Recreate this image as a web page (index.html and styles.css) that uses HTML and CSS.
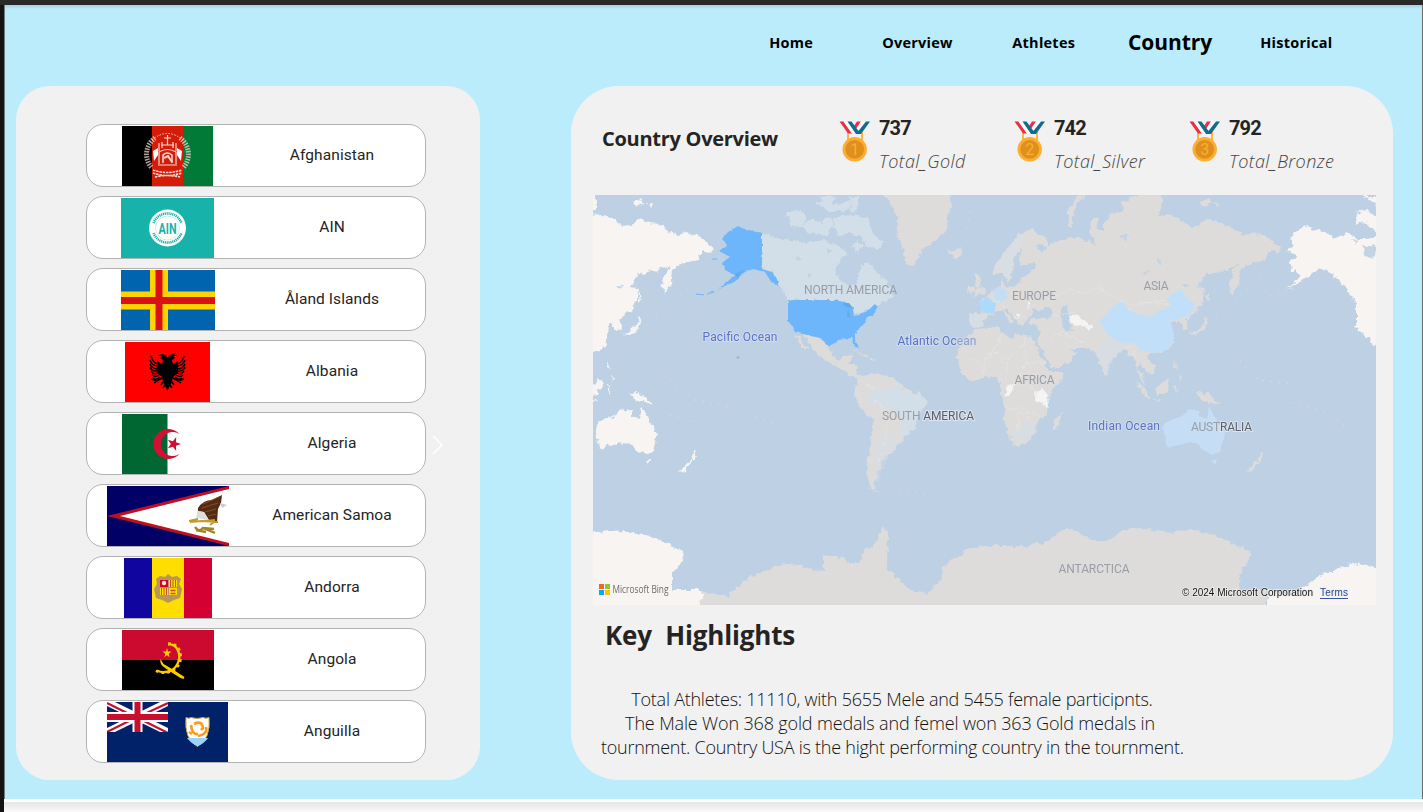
FILE: index.html
```html
<!DOCTYPE html>
<html lang="en">
<head>
<meta charset="utf-8">
<title>Country Overview</title>
<link rel="stylesheet" href="styles.css">
</head>
<body>
<div class="topbar"></div>
<div class="stage">
<main class="report">
  <nav class="nav">
    <a>Home</a><a>Overview</a><a>Athletes</a><a class="active">Country</a><a>Historical</a>
  </nav>
  <div class="panels">
    <section class="panel countries">
      <ul class="list">
        <li class="card"><span class="flag"><svg width="91" height="60" viewBox="0 0 91 60"><path d="M0 0h31v60H0z"/><path fill="#d51c08" d="M30 0h31v60H30z"/><path fill="#007a36" d="M61 0h30v60H61z"/><g fill="none" stroke="#f3d9d3"><path d="M33 12a20 20 0 0 0-3 30M58 12a20 20 0 0 1 3 30" stroke-width="5" stroke-dasharray="1.500 1.100" opacity=".75"/><path d="M30 14q15-13 31 0" stroke-width="1" stroke-dasharray="1.500 1.500"/><path d="M37 38V26q8.500-5 17 0v12M37 25v-8M54 25v-8M40 22v-6M51 22v-6M45.500 19V9M42 12h7M36 39h19M39 19h13" stroke-width="1.200"/><path d="M41 37v-8q4-4 9 0v8" stroke-width="1.500"/><path d="M42 32l4-2 4 6" stroke-width="2"/><path d="M31 44q14 5 29 0M31 47q14 5 29 0M33 51q12-3 25 0" stroke-width="1.600" stroke-dasharray="2.500 .8"/></g><path d="M31 25l5-3v7l-4 6zM60 25l-5-3v7l4 6z" fill="#fff"/></svg></span><span class="name">Afghanistan</span></li>
        <li class="card"><span class="flag"><svg width="93" height="60" viewBox="0 0 93 60"><path fill="#17b2aa" d="M0 0h93v60H0z"/><circle cx="46.500" cy="30" r="18.500" fill="#fff"/><path d="M32.500 25a15 15 0 0 1 28 0M32.500 35a15 15 0 0 0 28 0" fill="none" stroke="#17b2aa" stroke-width="2.500" stroke-dasharray="1.200 .7"/><circle cx="46.500" cy="30" r="12" fill="#fff" stroke="#b3e4e1" stroke-width=".7"/><text class="ain" x="37.500" y="35.500" textLength="18" lengthAdjust="spacingAndGlyphs">AIN</text></svg></span><span class="name">AIN</span></li>
        <li class="card"><span class="flag"><svg width="94" height="60" viewBox="0 0 94 60"><path fill="#0064ae" d="M0 0h94v60H0z"/><path fill="#ffd300" d="M29 0h18v60H29zM0 21.500h94v18H0z"/><path fill="#db0f16" d="M34.500 0h7v60h-7zM0 27h94v7H0z"/></svg></span><span class="name">Åland Islands</span></li>
        <li class="card"><span class="flag"><svg width="85" height="60" viewBox="0 0 85 60"><path fill="red" d="M0 0h85v60H0z"/><g id="wing"><path d="M43 17q-2-5-7-5l-3 2 4 0-2 2 3 2-1 4q-3-1-5-4l0 13 5 4 1 5 2 4 3 5z"/><path d="M33 22q-5-1-7-8M33 24q-6 0-8-6M33 27q-6 0-8-5M33 29q-6 1-8-4M33 31q-5 2-7-2M34 33q-4 3-7 0M35 35q-4 4-7 1M37 36l-5 3-6-2M32 39l-3 2M38 40l-2 3M40 43l-2 3" fill="none" stroke="#000" stroke-width="1.500"/></g><use href="#wing" transform="matrix(-1 0 0 1 85 0)"/></svg></span><span class="name">Albania</span></li>
        <li class="card"><span class="flag"><svg width="91" height="60" viewBox="0 0 91 60"><path fill="#006632" d="M0 0h45.500v60H0z"/><path fill="#d21034" d="M57.500 20a15 15 0 1 0 0 20 12 12 0 1 1 0-20zM59 30l-5-1.800.2-5.200-3.300 4.200-5-1.500 2.900 4.300-2.900 4.300 5-1.500 3.300 4.200-.2-5.200z"/></svg></span><span class="name">Algeria</span></li>
        <li class="card"><span class="flag"><svg width="122" height="60" viewBox="0 0 122 60"><path fill="#000066" d="M0 0h122v60H0z"/><path fill="#bd1021" d="M0 30L122 0v60z"/><path fill="#fff" d="M13 30L122 3v54z"/><path fill="#542b15" d="M91 22q5-8 14-8l10-5-1 8-3 6-1 13-8-2-5-8-6-1z"/><path d="M96 18l16-7M95 22l16-5M98 26l11-3M101 30l8-2" stroke="#8a4b26"/><path fill="#ccc" d="M113 17l7 2-5 3z"/><path fill="#ddd" d="M90 25l7 1 4 8-10-2-2 3z"/><path d="M82 35l9-2M83 36l12-1 16 1M98 35l10-1M107 36l-4 3" fill="none" stroke="#c29b28" stroke-width="2"/><path d="M88 41q4 6 8 1l12 5M89 44l10 2M96 42l11 1" fill="none" stroke="#a38324" stroke-width="2.400"/></svg></span><span class="name">American Samoa</span></li>
        <li class="card"><span class="flag"><svg width="88" height="60" viewBox="0 0 88 60"><path fill="#10069f" d="M0 0h28.500v60H0z"/><path fill="#fedd00" d="M28 0h32v60H28z"/><path fill="#d50032" d="M60 0h28v60H60z"/><path fill="#b89658" d="M32 21l4-3 5 1 3-3 4 3 5-1 4 3-2 5 3 5-2 9-6 2-6 3-6-3-6-2-2-9 3-5z"/><path fill="#d50032" d="M36 22h8v7h-8zM45 30h8v7h-8z"/><path fill="#fedd00" d="M45 22h8v7h-8zM36 30h8v7h-8z"/><path d="M46.500 22v7M49 22v7M51.500 22v7M37.500 30v7M40 30v7M42.500 30v7" stroke="#c8502d"/><path fill="#fedd00" d="M45 30h8v7h-8z"/><path d="M46.500 32.500h5M46.500 35.500h5" stroke="#c8502d" stroke-width="1.300"/><circle cx="40" cy="25" r="2.200" fill="#f6e8c8"/></svg></span><span class="name">Andorra</span></li>
        <li class="card"><span class="flag"><svg width="92" height="60" viewBox="0 0 92 60"><path fill="#cc092f" d="M0 0h92v30H0z"/><path d="M0 30h92v30H0z"/><path fill="none" stroke="#ffcb00" stroke-width="2.400" d="M46 14.500c9-1 13 9 10.500 17-3 9-12 13-22 9"/><path fill="none" stroke="#ffcb00" stroke-width="2.500" stroke-dasharray="2.800 3" d="M46 13.500c12 0 14 10 12 19-4 9-14 13-25 8"/><path fill="#ffcb00" d="M38.500 29l3 5q9 5 21 13l-1 2-3-1q-13-8-18-12-3-3-2-7zM45 18l1 3.500 3.500 0-2.800 2.200 1 3.500-2.700-2-2.700 2 1-3.500-2.800-2.200h3.500z"/></svg></span><span class="name">Angola</span></li>
        <li class="card"><span class="flag"><svg width="121" height="60" viewBox="0 0 121 60"><path fill="#012169" d="M0 0h121v60H0z"/><svg width="61" height="30" viewBox="0 0 61 30"><path d="M0 0l61 30M61 0L0 30" stroke="#fff" stroke-width="7"/><path d="M0 1l30 15M61 1L31 15M61 31L31 16M0 30l30-15" stroke="#c8102e" stroke-width="2.200"/><path d="M30.500 0v30M0 15h61" stroke="#fff" stroke-width="10"/><path d="M30.500 0v30M0 15h61" stroke="#c8102e" stroke-width="6"/></svg><path fill="#fff" stroke="#d1a63a" d="M79 15.500q3 1.500 5 0 6 2 12 0 3 1.500 6 0 2 21-11.500 29Q77 37 79 15.500z"/><path fill="#9bd3ff" d="M80 36h21q-3 5-10.500 8-7-3-10.500-8z"/><path fill="none" stroke="#ff9a18" stroke-width="2.600" d="M87 22q8-4 9 4l-2 2M99 25q2 7-8 9M91 32q-6 1-7-9M82 30l3 2"/></svg></span><span class="name">Anguilla</span></li>
      </ul>
      <svg class="chevron" width="12" height="20" viewBox="0 0 12 20"><path d="M1 1l9 9-9 9" fill="none" stroke="#fff" stroke-width="1.500"/></svg>
    </section>

    <section class="panel overview">
      <header class="head">
        <h1>Country Overview</h1>
        <div class="stat"><svg class="medal" width="32" height="42" viewBox="0 0 32 42"><g id="medal"><path d="M9 11v8M23 11v8" stroke="#fbb031" stroke-width="1.800"/><path fill="#ec2f49" d="M.5.500h4l8.500 12H9zM18 .500h4L17 8l-2-3z"/><path fill="#fafafa" d="M4.500.500h4l8 12H13zM22 .500h5l-8 11-2-3.500z"/><path fill="#136b8e" d="M8.500.500h4L21 12l-4 1zM27 .500h4L22 13h-5z"/><circle cx="15.700" cy="28.300" r="12.200" fill="#fbae2f"/><circle cx="15.700" cy="28.300" r="9.400" fill="#df901c"/></g><text class="rank" x="15.700" y="34">1</text></svg><div><b>737</b><i>Total_Gold</i></div></div>
        <div class="stat"><svg class="medal" width="32" height="42" viewBox="0 0 32 42"><use href="#medal"/><text class="rank" x="15.700" y="34">2</text></svg><div><b>742</b><i>Total_Silver</i></div></div>
        <div class="stat"><svg class="medal" width="32" height="42" viewBox="0 0 32 42"><use href="#medal"/><text class="rank" x="15.700" y="34">3</text></svg><div><b>792</b><i>Total_Bronze</i></div></div>
      </header>

      <svg class="map" width="783" height="410" viewBox="593 195 783 410">
        <defs>
          <filter id="coast" filterUnits="userSpaceOnUse" x="570" y="180" width="1400" height="460" color-interpolation-filters="sRGB"><feTurbulence type="fractalNoise" baseFrequency=".17" numOctaves="3" seed="4"/><feDisplacementMap in="SourceGraphic" scale="7" xChannelSelector="R" yChannelSelector="G"/></filter>
          <filter id="fine" filterUnits="userSpaceOnUse" x="570" y="180" width="1400" height="460" color-interpolation-filters="sRGB"><feTurbulence type="fractalNoise" baseFrequency=".2" numOctaves="2" seed="9"/><feDisplacementMap in="SourceGraphic" scale="3" xChannelSelector="R" yChannelSelector="G"/></filter>
          <clipPath id="west"><path d="M580 185H718V500H701V625H580z"/></clipPath>
          <clipPath id="east"><path d="M1285 185h105v440h-123V500h18z"/></clipPath>
          <path id="asia" d="M1060 350L1075 348 1083 348 1095 350 1102 370 1106 376 1110 367 1111 361 1124 348 1130 357 1135 360 1140 377 1145 386 1143 376 1138 368 1140 360 1145 372 1153 373 1155 367 1149 357 1151 353 1157 353 1170 349 1174 340 1173 333 1169 325 1172 322 1180 321 1183 330 1188 329 1186 320 1197 312 1204 300 1205 288 1197 287 1207 273 1227 270 1238 265 1232 273 1229 285 1232 294 1239 282 1240 270 1250 263 1265 260 1270 250 1278 253 1282 249 1277 245 1267 237 1253 233 1243 235 1235 230 1220 223 1207 219 1198 225 1190 227 1178 218 1168 214 1157 215 1162 208 1162 197 1157 193 1140 194 1133 198 1122 203 1123 210 1110 215 1103 223 1103 233 1098 230 1097 217 1092 220 1090 233 1097 245 1080 237 1070 237 1052 243 1042 253 1036 260 1036 300 1040 305 1052 310 1052 319 1045 318 1030 319 1028 324 1038 326 1040 335 1037 341 1047 360 1052 368 1070 362 1077 353 1068 347z"/>
          <path id="aisles" d="M1135 381l5 3 10 13-4 0zM1155 388l12-9 3 6-5 9-8 1zM1150 398l14 3-4 1zM1174 385l3 0-2 3 3 6-4-2zM1174 360l3 5-1 6zM1178 375l4 2-2 4zM1197 393l12 1 10 11-8-3-8-1-2-4zM1189 334l8-3 7-7 2-8 2 8-5 7-8 4zM1206 290l2 10-2 2zM1199 202l9-3 4 4-8 4zM1214 203l6 1-3 3z"/>
          <path id="aus" d="M1163 427L1165 422 1182 416 1190 409 1199 411 1199 416 1207 419 1209 406 1215 418 1225 433 1220 452 1212 455 1203 450 1198 444 1190 442 1167 448zM1211 460l6 0-2 5z"/>
          <path id="nz" d="M1261 452l3 3-4 7-2-3zM1257 460l2 3-8 9-4-1zM1197 393l12 1 10 11-8-3-8-1-2-4z"/>
          <path id="ant" d="M701 625V591L727 597 737 587 750 577 773 568 787 563 810 568 823 572 823 555 843 558 857 565 865 550 875 545 883 525 888 533 887 570 910 590 927 593 942 578 943 567 967 550 983 546 1027 546 1045 542 1068 528 1080 534 1103 543 1120 532 1135 527 1163 532 1193 530 1213 535 1233 543 1252 553 1246 565 1240 573 1240 590 1267 590V625z"/>
          <path id="alaska" d="M738 226L747 230 762 233V269L772 272 779 283 777 286 770 280 765 272 753 269 745 272 737 280 723 287 718 290 735 275 725 270 723 262 730 257 719 251 727 245 722 239 728 232z"/>
        </defs>
        <path fill="#bdd0e4" d="M593 195h783v410H593z"/>
        <g filter="url(#coast)">
          <g fill="#dddcdb">
            <use href="#asia"/><use href="#aisles"/><use href="#nz"/><use href="#ant"/>
            <path d="M1045 250L1030 273 1022 278 1017 285 1005 287 1003 279 1000 287 992 290 988 297 978 302 983 307 980 314 969 313 969 323 975 327 982 325 987 317 993 315 997 310 1002 311 1008 320 1013 324 1012 318 1004 310 1007 308 1015 318 1018 325 1024 324 1027 318 1032 316 1032 308 1043 311 1047 300z"/>
            <path d="M994 274L993 267 1002 258 1007 248 1017 235 1032 229 1047 240 1047 247 1037 244 1042 253 1036 262 1022 266 1019 260 1021 248 1015 256 1013 270 1008 282 1003 274z"/>
            <path d="M975 329L987 328 998 326 1002 333 1013 338 1017 333 1033 337 1035 343 1043 360 1050 372 1063 372 1060 382 1050 393 1047 400 1047 415 1038 422 1035 433 1027 443 1013 447 1010 437 1003 420 1005 410 1000 395 1000 385 997 378 983 377 970 381 960 370 957 357 960 345zM1062 411l-2 12-5 8-3-4 2-9 5-2z"/>
            <path d="M974 274l5 2 1 8 5 9-12 3 4-8zM967 294l1-7 6-2 0 7zM948 252l13-3 2 5-8 5zM875 190L887 198 897 217 898 233 902 250 908 265 915 267 922 250 937 240 948 228 947 217 952 207 950 190zM1090 193l-13 10-5 14 2 11-6-3 0-14 10-15z"/>
            <path d="M798 335l10 15-5-1-8-15M802 333L820 338 831 347 832 356 840 361 843 357 853 354 850 363 857 367 858 375 866 377 862 380 850 375 837 366 820 357 811 346zM852 350l16 5-2 2zM869 358l6 0 0 2z"/>
            <path d="M857 380L870 372 893 377 903 387 925 397 927 403 920 413 915 427 902 440 893 452 883 460 878 473 873 485 879 493 870 487 867 473 870 447 873 420 863 410 855 397z"/>
          </g>
          <g fill="#d3dfe8">
            <path d="M762 233L777 238 790 240 807 243 823 240 837 245 847 253 837 262 835 273 843 283 856 285 862 265 868 262 873 270 883 277 890 285 893 297 883 302 865 311 853 314 850 306 835 300H787L779 285 772 272 762 269z"/>
            <path d="M787 212l11-3 9 9-6 8-10 1zM800 226l12-7 10 4 8-6 3 8-6 11-17-3zM817 203l12-4 5 6 17-4-3 9-20 2zM832 219l12-6 9 4-3 15-12 5zM850 196l8 0 0 10-7 8zM855 215l13 4 5 15 11 8-6 8-10-4-9-10-8-2-6-9zM820 195l18 2-6 5-10-1zM857 240l8 6-8 7-6-6z"/>
            <path d="M868 397l9-9 11 2 8-4 6 4 23 7 2 6-7 10-5 12-12 13-4-5 4-12-12-13-10-1-10-6z"/><path d="M874 440l18-10 7 12-12 16-10 25-3-1z" opacity=".35"/>
            <path d="M970 315l15 0-6 10-7 0z"/><path d="M1098 345l15-9 10 12-12 15-5 12-9-21z" opacity=".55"/><path d="M1014 432l14-11 8 5-5 10-14 8z" opacity=".6"/>
            <path d="M994 268l10-12 5-10 9-10 10-4-9 14-4 12-3 18-8 2z" opacity=".5"/>
          </g>
          <path fill="#f4f4f4" d="M1069 316l9 0 14 10-3 4-9-4-9-1zM1006 388l9-5-3 9-6 5zM1034 393l8-4 5 5 1 13-12-7zM1016 314l4 2-2 3zM1028 302l3 4-3 4z"/>
          <path fill="#bdd0e4" d="M1062 308l5-3 1 12 3 14-5 3-4-13z"/>
          <g fill="#f7f4f1">
            <g clip-path="url(#west)"><use href="#asia" x="-567"/><use href="#aisles" x="-567"/><path d="M585 220l30 0 5 100-12 5-2 22-21 6z"/><path d="M580 190h16v19h-16zM580 385h20l-4 9-16 4z"/></g>
            <use href="#aus" x="-567"/><use href="#nz" x="-567"/>
            <g clip-path="url(#west)"><use href="#ant" x="-567"/></g>
            <path d="M580 532h20v93h-20z"/>
            <path d="M680 591h21v34h-21z"/>
            <g clip-path="url(#east)"><use href="#alaska" x="567"/><use href="#ant" x="567"/></g>
            <path d="M1325 233L1337 238 1348 233 1360 240 1382 233V350L1366 337 1356 327V305L1345 286 1334 273 1325 269zM1355 212l12-2 10 8v14l-14-10-6 2zM1363 196l16 0v12z"/>
          </g>
        </g>
        <g fill="#c2d3e4" filter="url(#coast)"><path d="M1363 245l14 2-5 12-8-5zM1352 239l7 2-2 4zM795 256l7 2-4 3zM806 275l7-2-4 5zM825 249l8 3-6 3zM1140 273l10-2-4 5zM1182 285l8 0-4 3zM1120 235l9 0-4 6zM1156 258l6 2-3 4zM615 285l8 1-4 3z"/></g>
        <g filter="url(#fine)">
          <path fill="#c2dff9" d="M1100 320L1113 307 1122 301 1128 310 1148 317 1172 305 1167 300 1173 293 1182 289 1187 300 1196 303 1190 315 1178 319 1170 322 1174 333 1173 344 1164 351 1149 353 1140 350 1135 342 1120 343 1107 334z"/>
          <path fill="#addafb" d="M978 302l10-5 8 7-2 10-11-1z"/><path fill="#c5ddf3" d="M992 290l8-3 7 3 0 9-5 5-8-5z"/>
          <use href="#aus" fill="#c5def5"/>
          <g fill="#6eb6fb"><use href="#alaska"/><path d="M788 300H835L848 303 853 308 854 316 865 313 875 304 878 308 873 315 867 317 865 322 855 333 855 340 859 348 855 347 852 338 838 340 830 347 820 338 807 335 795 332 788 320z"/><path d="M712 259l5 0M696 294l8 1M707 294l7-2" stroke="#6eb6fb"/><path d="M737 355l3 3-2 0z"/></g>
          <path fill="#61a9ed" d="M842 303l7 0 4 5-8-2zM848 309l2 8-3 0zM735 274l10-5-7 8z"/>
        </g>
        <g fill="none" stroke="#e7e6e4" stroke-width=".7" filter="url(#coast)"><path d="M969 360h14l10-10 12-18M982 377l3-17 10-8 12 10v18M1007 360l18-16M1025 338v25h20M1025 363l-6 13 18 0M1007 385l23 0 8 12M1005 408h22v12M1018 430v-17h20M1053 314l22 0M1050 340l12-8 15 8 12 5M1050 300l18-10 18 3 12-6 15 10 22 8 30-5M1010 293l15 6 12-6M993 298l13 10M1128 310l15-8 27 3M1127 345l10 12M873 398l10 9 6 12-3 16-8 30M863 382l12 8"/></g>
        <g fill="none" stroke="#dce3e8" stroke-width="1" stroke-dasharray="1 7"><path d="M650 320l22-18 20-18M670 380l25 20 40 8 42 18M670 415l25 7M1210 320l27-22 25-20M1240 360l18 20 35 4M1285 400l40 12 25 18M860 488l40 0 35 9M1270 296l40-10M970 211l-4 20"/></g>
        <g class="land"><text x="804" y="294" textLength="93">NORTH AMERICA</text><text x="1012" y="300" textLength="44">EUROPE</text><text x="1143.500" y="290" textLength="25">ASIA</text><text x="1014.500" y="384" textLength="40">AFRICA</text><text x="882" y="420" textLength="92">SOUTH <tspan class="dark">AMERICA</tspan></text><text x="1191" y="430.500" textLength="61">AUST<tspan class="dark">RALIA</tspan></text><text x="1058.500" y="572.500" textLength="71">ANTARCTICA</text></g>
        <g class="sea"><text x="702.500" y="341" textLength="75">Pacific Ocean</text><text x="897.500" y="344.500" textLength="79">Atlantic Oc<tspan class="pale">ean</tspan></text><text x="1088" y="430" textLength="72">Indian Ocean</text></g>
        <path fill="#f26522" d="M599 584h5v5h-5z"/><path fill="#8dc63f" d="M605 584h5v5h-5z"/><path fill="#00aeef" d="M599 590h5v5h-5z"/><path fill="#ffc20e" d="M605 590h5v5h-5z"/>
        <text class="bing" x="612.500" y="593" textLength="56" lengthAdjust="spacingAndGlyphs">Microsoft Bing</text>
        <text class="copy" x="1182" y="596" textLength="131">© 2024 Microsoft Corporation</text>
        <text class="copy terms" x="1320" y="596" textLength="28">Terms</text>
        <path d="M1320 598.500h28" stroke="#3b53a4" stroke-width="1"/>
      </svg>

      <h2>Key&nbsp; Highlights</h2>
      <p class="summary"><span class="l1">Total Athletes: 11110, with 5655 Mele and 5455 female participnts.</span><span class="l2">The Male Won 368 gold medals and femel won 363 Gold medals in</span><span class="l3">tournment. Country USA is the hight performing country in the tournment.</span></p>
    </section>
  </div>
</main>
</div>
<div class="below"></div>
</body>
</html>
```

FILE: styles.css
```css
* { box-sizing: border-box; }
body { margin: 0; width: 1423px; height: 812px; overflow: hidden; background: #fff; font-family: "Open Sans", "Noto Sans", sans-serif; color: #252423; }
.topbar { height: 5px; background: #292929; }
.stage { height: 794px; border-left: 4px solid #141414; border-right: 1px solid #6a6a6a; }
.report { height: 794px; padding-left: 1px; background: #baecfb; box-shadow: inset 1px 0 #707c80, inset 0 4px 3px -2px #a5d0de; }
.below { height: 13px; border-left: 4px solid #141414; background: linear-gradient(#fff 0 3px, #e5e5e5 3px, #fafafa 13px); }

.nav { display: grid; grid-template-columns: repeat(5, 126.300px); padding-left: 723px; height: 81px; align-items: center; text-align: center; padding-bottom: 7px; font-weight: 700; font-size: 14.500px; letter-spacing: .25px; color: #000; }
.nav a { white-space: nowrap; }
.nav .active { font-size: 21px; letter-spacing: -.05px; padding-bottom: 1px; }

.panels { display: flex; gap: 91px; padding-left: 11px; }
.panel { height: 694px; background: #f1f1f1; box-shadow: 0 0 1px #d9eff3; }
.countries { position: relative; width: 464px; border-radius: 34px; padding: 38px 0 0 70px; }
.list { list-style: none; margin: 0; padding: 0; display: grid; gap: 9px; width: 340px; }
.card { display: flex; align-items: center; height: 63px; background: #fff; border: 1px solid #b3b3b3; border-radius: 17px; }
.flag { width: 161px; display: flex; justify-content: center; }
.flag svg { display: block; }
.name { flex: 1; margin-right: 9px; text-align: center; font: 400 15.500px/20px Roboto, sans-serif; letter-spacing: .08px; padding-bottom: 2px; white-space: nowrap; }
.ain { font: 700 15px Roboto, sans-serif; fill: #17b2aa; }
.chevron { position: absolute; left: 416px; top: 349px; }

.overview { width: 822px; border-radius: 48px; padding-left: 22px; }
.head { display: grid; grid-template-columns: 246px 175px 175px 175px; height: 109px; }
h1 { margin: 0; padding: 38px 0 0 9px; font-size: 20px; line-height: 30px; font-weight: 700; letter-spacing: -.28px; white-space: nowrap; }
.stat { display: flex; gap: 8px; padding-top: 35px; }
.stat b { display: block; font: 700 20px/14px Roboto, sans-serif; letter-spacing: -.9px; }
.stat i { display: block; margin-top: 14px; font-size: 18px; line-height: 24px; font-weight: 300; letter-spacing: .42px; color: #444; white-space: nowrap; }
.rank { font: 400 16px Roboto, sans-serif; text-anchor: middle; fill: #fbae2f; }
.map { display: block; }
.land text { font: 400 12px Roboto, sans-serif; fill: #999da6; }
.land .dark { fill: #5b5d69; paint-order: stroke; stroke: #dbe5ef; stroke-width: 2px; }
.sea text { font: 400 12px Roboto, sans-serif; fill: #5a72c4; paint-order: stroke; stroke: #cfdcec; stroke-width: 2px; }
.sea .pale { fill: #909cc4; }
.bing { font: 500 10px "Open Sans", sans-serif; fill: #6b6b6b; }
.copy { font: 400 10px "Liberation Sans", sans-serif; fill: #111; paint-order: stroke; stroke: #eee; stroke-width: 1.500px; }
.terms { fill: #2c459c; }
h2 { margin: 12px 0 0 12px; font-size: 26px; line-height: 36px; font-weight: 700; letter-spacing: -.15px; white-space: nowrap; }
.summary { margin: 34px 0 0 8px; width: 582px; font-size: 18px; line-height: 24px; font-weight: 300; color: #111; }
.summary span { display: block; text-align: center; white-space: nowrap; letter-spacing: -.25px; }
.summary .l2 { margin-left: -4px; letter-spacing: -.15px; }
```
